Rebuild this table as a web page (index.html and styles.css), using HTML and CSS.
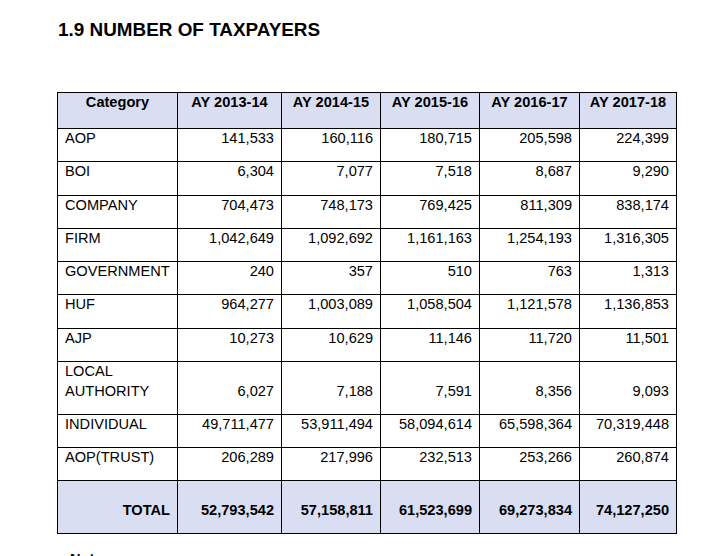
FILE: index.html
```html
<!DOCTYPE html>
<html>
    <head>
        <meta charset="utf-8" />
        <title>Number of taxpayers</title>
        <link rel="stylesheet" href="styles.css">
    </head>
    <body>
        <div class="page">
            <h1 class="section-title">1.9 NUMBER OF TAXPAYERS</h1>

            <table class="tax-table">
                <colgroup>
                    <col class="col-cat">
                    <col class="col-a">
                    <col class="col-b">
                    <col class="col-b">
                    <col class="col-c">
                    <col class="col-d">
                </colgroup>
                <thead>
                    <tr>
                        <th>Category</th>
                        <th>AY 2013-14</th>
                        <th>AY 2014-15</th>
                        <th>AY 2015-16</th>
                        <th>AY 2016-17</th>
                        <th>AY 2017-18</th>
                    </tr>
                </thead>
                <tbody>
                    <tr><td>AOP</td><td>141,533</td><td>160,116</td><td>180,715</td><td>205,598</td><td>224,399</td></tr>
                    <tr><td>BOI</td><td>6,304</td><td>7,077</td><td>7,518</td><td>8,687</td><td>9,290</td></tr>
                    <tr><td>COMPANY</td><td>704,473</td><td>748,173</td><td>769,425</td><td>811,309</td><td>838,174</td></tr>
                    <tr><td>FIRM</td><td>1,042,649</td><td>1,092,692</td><td>1,161,163</td><td>1,254,193</td><td>1,316,305</td></tr>
                    <tr><td>GOVERNMENT</td><td>240</td><td>357</td><td>510</td><td>763</td><td>1,313</td></tr>
                    <tr><td>HUF</td><td>964,277</td><td>1,003,089</td><td>1,058,504</td><td>1,121,578</td><td>1,136,853</td></tr>
                    <tr><td>AJP</td><td>10,273</td><td>10,629</td><td>11,146</td><td>11,720</td><td>11,501</td></tr>
                    <tr><td>LOCAL<br>AUTHORITY</td><td>6,027</td><td>7,188</td><td>7,591</td><td>8,356</td><td>9,093</td></tr>
                    <tr><td>INDIVIDUAL</td><td>49,711,477</td><td>53,911,494</td><td>58,094,614</td><td>65,598,364</td><td>70,319,448</td></tr>
                    <tr><td>AOP(TRUST)</td><td>206,289</td><td>217,996</td><td>232,513</td><td>253,266</td><td>260,874</td></tr>
                </tbody>
                <tfoot>
                    <tr class="total-row">
                        <td>TOTAL</td><td>52,793,542</td><td>57,158,811</td><td>61,523,699</td><td>69,273,834</td><td>74,127,250</td>
                    </tr>
                </tfoot>
            </table>

            <p class="note"><b>Note:</b></p>
        </div>
    </body>
</html>
```

FILE: styles.css
```css
html, body { margin: 0; padding: 0; background: #fff; overflow: hidden }

body {
    font-family: "Liberation Sans", Arial, sans-serif;
    color: #000;
}

.page {
    padding: 19px 0 0 57px;
}

.section-title {
    margin: 0 0 51px 1px;
    font-size: 18.9px;
    line-height: 22px;
    font-weight: bold;
}

.tax-table {
    border-collapse: collapse;
    table-layout: fixed;
    width: 619px;
    font-size: 14.6px;
    line-height: 19.5px;
}

.col-cat { width: 120px }
.col-a { width: 104px }
.col-b { width: 99px }
.col-c { width: 100px }
.col-d { width: 97px }

.tax-table th,
.tax-table td {
    border: 1px solid #000;
    padding: 0 7px 12.8px 7px;
    vertical-align: bottom;
    white-space: nowrap;
}

.tax-table th {
    background: #d9def2;
    font-weight: bold;
    text-align: center;
    vertical-align: top;
    padding-bottom: 15.5px;
}

.tax-table td {
    text-align: right;
}

.tax-table td:first-child {
    text-align: left;
}

/* Total row: tinted, bold, everything pushed right */
.total-row td {
    background: #d9def2;
    font-weight: bold;
    padding-top: 19.5px;
}

.total-row td:first-child {
    text-align: right;
}

.note {
    margin: 17px 0 0 13px;
    font-size: 14.6px;
}
```
